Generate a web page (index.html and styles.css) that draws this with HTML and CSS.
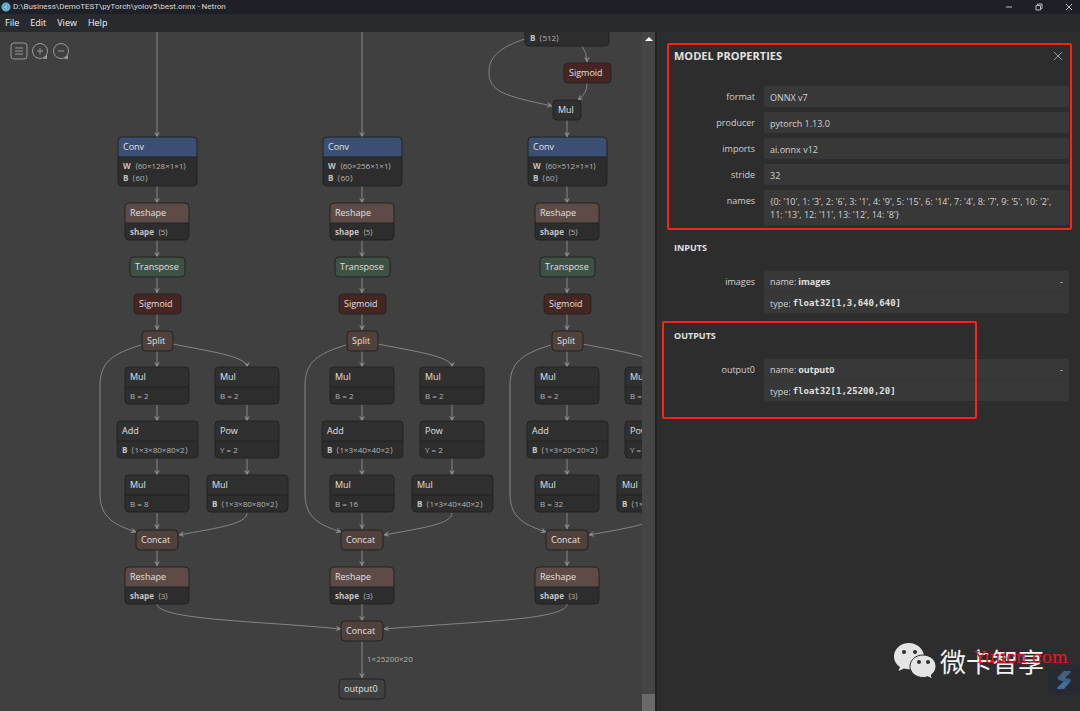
FILE: index.html
```html
<!DOCTYPE html>
<html lang="en">
<head>
    <meta charset="UTF-8">
    <meta name="viewport" content="width=device-width, initial-scale=1.0">
    <title>D:\Business\DemoTEST\pyTorch\yolov5\best.onnx - Netron</title>
    <link rel="stylesheet" href="styles.css">
</head>
<body>
    <header class="titlebar">
        <svg class="app-icon" viewBox="0 0 20 20">
            <circle cx="10" cy="10" r="9.5" fill="#3f8fae"/>
            <circle cx="10" cy="10" r="6.5" fill="none" stroke="#a9d8e8" stroke-width="1.5"/>
            <path d="M12 6L7 10l5 4M8 10h5" fill="none" stroke="#d5eef6" stroke-width="1.5"/>
        </svg>
        <span class="window-title">D:\Business\DemoTEST\pyTorch\yolov5\best.onnx - Netron</span>
        <div class="window-buttons">
            <button aria-label="Minimize"><svg viewBox="0 0 8 8"><path d="M1 4h6"/></svg></button>
            <button aria-label="Restore"><svg viewBox="0 0 8 8"><path d="M1 2.5h4.500v4.500H1zM2.500 2.500V1H7v4.500H5.500"/></svg></button>
            <button aria-label="Close"><svg viewBox="0 0 8 8"><path d="M1 1l6 6M7 1L1 7"/></svg></button>
        </div>
    </header>

    <nav class="menubar">
        <button>File</button>
        <button>Edit</button>
        <button>View</button>
        <button>Help</button>
    </nav>

    <main class="workspace">
        <section class="graph">
            <svg class="canvas" id="canvas">
                <defs>
                    <marker id="arrow" viewBox="0 0 10 10" refX="9" refY="5" markerWidth="6" markerHeight="6" orient="auto" markerUnits="userSpaceOnUse">
                        <path d="M0 0L10 5L0 10L4 5z"/>
                    </marker>
                </defs>
                <g id="scene" transform="translate(0 -32)"></g>
            </svg>
            <div class="toolbar">
                <button aria-label="Menu">
                    <svg viewBox="0 0 18 18"><rect x="1" y="1" width="16" height="16" rx="3"/><path d="M5 6h8M5 9h8M5 12h8"/></svg>
                </button>
                <button aria-label="Zoom in">
                    <svg viewBox="0 0 18 18"><circle cx="9" cy="9" r="7.500"/><path d="M6 9h6M9 6v6M14 14l2 2"/><path class="tail" d="M16 13v4h-4z"/></svg>
                </button>
                <button aria-label="Zoom out">
                    <svg viewBox="0 0 18 18"><circle cx="9" cy="9" r="7.500"/><path d="M6 9h6M14 14l2 2"/><path class="tail" d="M16 13v4h-4z"/></svg>
                </button>
            </div>
            <div class="scrollbar">
                <svg class="scroll-up" viewBox="0 0 8 4"><path d="M0 4L4 0L8 4z"/></svg>
                <div class="scroll-thumb"></div>
            </div>
        </section>

        <aside class="sidebar">
            <button class="close" aria-label="Close">
                <svg viewBox="0 0 10 10"><path d="M1 1l8 8M9 1L1 9"/></svg>
            </button>
            <h1>MODEL PROPERTIES</h1>
            <dl class="properties">
                <dt>format</dt><dd>ONNX v7</dd>
                <dt>producer</dt><dd>pytorch 1.13.0</dd>
                <dt>imports</dt><dd>ai.onnx v12</dd>
                <dt>stride</dt><dd>32</dd>
                <dt>names</dt><dd>{0: '10', 1: '3', 2: '6', 3: '1', 4: '9', 5: '15', 6: '14', 7: '4', 8: '7', 9: '5', 10: '2',<br>11: '13', 12: '11', 13: '12', 14: '8'}</dd>
            </dl>
            <h2>INPUTS</h2>
            <dl class="properties">
                <dt>images</dt>
                <dd class="argument">
                    <div>name: <b>images</b><span class="expander">-</span></div>
                    <div>type: <code>float32[1,3,640,640]</code></div>
                </dd>
            </dl>
            <h2>OUTPUTS</h2>
            <dl class="properties">
                <dt>output0</dt>
                <dd class="argument">
                    <div>name: <b>output0</b><span class="expander">-</span></div>
                    <div>type: <code>float32[1,25200,20]</code></div>
                </dd>
            </dl>

            <div class="highlight highlight-model"></div>
            <div class="highlight highlight-outputs"></div>

            <div class="watermark">
                <svg class="wechat" viewBox="0 0 42 36">
                    <path d="M15 0C6.500 0 0 6 0 13.500c0 4.500 2.200 8 6 10.500L4.500 28l5.500-2.500c1.600.5 3.300.7 5 .7 8.500 0 15-5.700 15-12.700S23.500 0 15 0z"/>
                    <path class="bubble" d="M29 12c-7.300 0-13 5-13 11.300S21.700 34.500 29 34.500c1.700 0 3.200-.3 4.700-.8L38.500 36l-1.300-4c3-2 4.800-5.200 4.800-8.700C42 17 36.300 12 29 12z"/>
                    <circle class="eye" cx="10" cy="9" r="2"/>
                    <circle class="eye" cx="21" cy="9" r="2"/>
                    <circle class="eye" cx="25" cy="19" r="2"/>
                    <circle class="eye" cx="34" cy="19" r="2"/>
                </svg>
                <span class="watermark-name" lang="zh-CN">微卡智享</span>
            </div>
            <span class="site">Yuucn.com</span>
            <div class="badge">
                <svg viewBox="0 0 16 20">
                    <path d="M8 1h6c1 0 1 1 .500 1.500L9 8H1z" fill="#45617f"/>
                    <path d="M4 7l10 2c1 .5 1 2 0 3l-3 1L2 9.500C1.500 8.500 3 7.500 4 7z" fill="#3b6288"/>
                    <path d="M14 12L8 19H2c-1 0-1-1-.500-1.500L7 12z" fill="#3f6f9c"/>
                </svg>
            </div>
        </aside>
    </main>

    <script src="graph.js"></script>
</body>
</html>
```

FILE: styles.css
```css
* {
    margin: 0;
    padding: 0;
    box-sizing: border-box;
}

body {
    font-family: 'Open Sans', 'Noto Sans', sans-serif;
    font-size: 9px;
    color: #d2d2d2;
    background: #404040;
    height: 100vh;
    display: flex;
    flex-direction: column;
    overflow: hidden;
}

button {
    font: inherit;
    color: inherit;
    background: none;
    border: none;
    cursor: pointer;
}

svg {
    display: block;
}

/* window frame */
.titlebar {
    height: 14px;
    background: #1f2027;
    display: flex;
    align-items: center;
    gap: 2px;
    padding-left: 1px;
    flex: none;
}

.app-icon {
    width: 10px;
    height: 10px;
}

.window-title {
    font-family: Roboto, sans-serif;
    font-size: 8px;
    line-height: 14px;
    color: #dadada;
}

.window-buttons {
    margin-left: auto;
    display: flex;
    gap: 22px;
    padding-right: 7px;
}

.window-buttons svg {
    width: 8px;
    height: 8px;
    fill: none;
    stroke: #b8b8b8;
}

.menubar {
    height: 18px;
    background: #292a2e;
    display: flex;
    align-items: center;
    gap: 11px;
    padding: 0 5px 1px;
    flex: none;
    color: #f4f4f4;
}

.workspace {
    flex: 1;
    min-height: 0;
    display: flex;
}

/* graph */
.graph {
    flex: 1;
    min-width: 0;
    display: flex;
    position: relative;
}

.canvas {
    flex: 1;
    min-width: 0;
    height: 100%;
}

.toolbar {
    position: absolute;
    top: 10px;
    left: 10px;
    display: flex;
    gap: 3px;
}

.toolbar svg {
    width: 18px;
    height: 18px;
    fill: none;
    stroke: #989898;
}

.toolbar .tail {
    fill: #989898;
    stroke: none;
}

.scrollbar {
    width: 13px;
    background: #454545;
    display: flex;
    flex-direction: column;
    align-items: center;
    justify-content: space-between;
    padding-top: 5px;
}

.scroll-up {
    width: 8px;
    height: 4px;
    fill: #ffffff;
}

.scroll-thumb {
    width: 100%;
    height: 17px;
    background: #6a6a6a;
}

.node text {
    font-size: 9px;
    fill: #e0e0e0;
}

.node .detail {
    font-size: 8px;
    fill: #b4b4b4;
}

.node .name {
    font-weight: bold;
    fill: #c4c4c4;
}

.node .body {
    fill: #2d2d2d;
}

.node .plain { fill: #303030; }
.node .layer { fill: #3b4f74; }
.node .shape { fill: #5e4b47; }
.node .transform { fill: #3d5145; }
.node .activation { fill: #462622; }
.node .tensor { fill: #50413c; }
.node .output { fill: #404040; }

.node .border {
    fill: none;
    stroke: #222222;
}

.node .divider {
    stroke: #222222;
}

.edge {
    fill: none;
    stroke: #858585;
    marker-end: url(#arrow);
}

#arrow path {
    fill: #8c8c8c;
}

.edge-label {
    font-size: 8px;
    fill: #b0b0b0;
}

/* sidebar */
.sidebar {
    width: 39%;
    min-width: 425px;
    flex: none;
    background: #2d2d2d;
    border-left: 2px solid #222222;
    padding: 16px 11px 0 17px;
    position: relative;
    overflow: hidden;
}

.sidebar h1,
.sidebar h2 {
    line-height: 16px;
    color: #e2e2e2;
}

.sidebar h1 {
    font-size: 11px;
    margin-bottom: 22px;
}

.sidebar h2 {
    font-size: 9px;
    margin: 15px 0;
}

.close {
    position: absolute;
    top: 19px;
    right: 17px;
}

.close svg {
    width: 10px;
    height: 10px;
    fill: none;
    stroke: #9a9a9a;
}

.properties {
    display: grid;
    grid-template-columns: 81px 1fr;
    gap: 5px 9px;
    line-height: 13px;
}

.properties dt {
    text-align: right;
    padding-top: 4px;
}

.properties dd {
    background: #383838;
    border-radius: 2px;
    padding: 5px 6px 4px;
}

.properties dd:not(:last-child) {
    padding-bottom: 3px;
}

.properties .argument {
    padding: 0;
}

.argument div {
    display: flex;
    gap: 2px;
    padding: 4px 6px;
    line-height: 13px;
}

.argument div + div {
    border-top: 1px solid #333333;
    padding-bottom: 3px;
}

.argument b,
.argument code {
    color: #e0e0e0;
}

.argument code {
    font-family: 'DejaVu Sans Mono', monospace;
    font-weight: bold;
}

.expander {
    margin-left: auto;
}

/* annotations over the panel */
.highlight {
    position: absolute;
    border: 2px solid #fb2318;
    border-radius: 2px;
    pointer-events: none;
}

.highlight-model {
    top: 11px;
    left: 10px;
    right: 8px;
    height: 187px;
}

.highlight-outputs {
    top: 289px;
    left: 5px;
    right: 103px;
    height: 98px;
}

.watermark {
    position: absolute;
    right: 36px;
    bottom: 32px;
    display: flex;
    align-items: center;
    gap: 4px;
}

.wechat {
    width: 42px;
    height: 36px;
    fill: #e4e4e4;
}

.wechat .bubble {
    stroke: #2d2d2d;
}

.wechat .eye {
    fill: #2d2d2d;
}

.watermark-name {
    font-family: 'Noto Sans CJK SC', sans-serif;
    font-size: 26px;
    line-height: 32px;
    color: #f4f4f4;
}

.site {
    position: absolute;
    right: 12px;
    bottom: 44px;
    font-family: 'DejaVu Serif', serif;
    font-size: 17px;
    line-height: 20px;
    color: #f0121c;
}

.badge {
    position: absolute;
    right: 0;
    bottom: 16px;
    width: 32px;
    height: 30px;
    border-radius: 6px 0 0 6px;
    background: #272a31;
    display: flex;
    align-items: center;
    justify-content: center;
}

.badge svg {
    width: 16px;
    height: 20px;
}
```

FILE: graph.js
```js
const SVG_NS = 'http://www.w3.org/2000/svg';
const scene = document.getElementById('scene');

function add(parent, tag, attrs, text) {
    const el = document.createElementNS(SVG_NS, tag);
    for (const key in attrs) {
        el.setAttribute(key, attrs[key]);
    }
    if (text) {
        el.textContent = text;
    }
    parent.appendChild(el);
    return el;
}

// rounded node, cx is its centre; rows are [name, value] pairs below the title
function node(cx, y, width, title, type, rows = []) {
    const left = cx - Math.floor(width / 2);
    const header = 20;
    const height = rows.length ? header + 5 + rows.length * 12 : header;
    const g = add(scene, 'g', { class: 'node', transform: `translate(${left} ${y})` });
    add(g, 'rect', { class: rows.length ? 'body' : type, width, height, rx: 4 });
    if (rows.length) {
        add(g, 'path', { class: type, d: `M0 ${header}V4Q0 0 4 0H${width - 4}Q${width} 0 ${width} 4V${header}z` });
        add(g, 'path', { class: 'divider', d: `M0 ${header}H${width}` });
    }
    add(g, 'text', { x: 5, y: 13 }, title);
    rows.forEach(([name, value], i) => {
        const line = add(g, 'text', { class: 'detail', x: 5, y: 32 + i * 12 });
        if (value.startsWith('=')) {
            line.textContent = `${name} ${value}`;
        } else {
            add(line, 'tspan', { class: 'name' }, name);
            add(line, 'tspan', { dx: 4 }, `⟨${value}⟩`);
        }
    });
    add(g, 'rect', { class: 'border', width, height, rx: 4 });
}

function edge(d) {
    add(scene, 'path', { class: 'edge', d });
}

// one detection head of the network
function head(cx, channels, grid, stride) {
    const size = `1×3×${grid}×${grid}×2`;
    const side = cx + 90;

    [[186, 203], [240, 257], [277, 293], [314, 330], [351, 367], [405, 421],
     [459, 475], [513, 529], [550, 566]].forEach(([from, to]) => edge(`M${cx} ${from}V${to}`));
    edge(`M${side} 405V421`);
    edge(`M${side} 459V475`);
    edge(`M${cx - 16} 345C${cx - 45} 354 ${cx - 57} 362 ${cx - 57} 386V494C${cx - 57} 518 ${cx - 42} 525 ${cx - 21} 532`);
    edge(`M${cx + 16} 344C${cx + 50} 351 ${side} 356 ${side} 367`);
    edge(`M${side} 513C${side} 524 ${cx + 60} 528 ${cx + 22} 535`);

    node(cx, 137, 79, 'Conv', 'layer', [['W', `60×${channels}×1×1`], ['B', '60']]);
    node(cx, 203, 64, 'Reshape', 'shape', [['shape', '5']]);
    node(cx, 257, 55, 'Transpose', 'transform');
    node(cx, 294, 47, 'Sigmoid', 'activation');
    node(cx, 331, 31, 'Split', 'tensor');
    node(cx, 367, 64, 'Mul', 'plain', [['B', '= 2']]);
    node(cx, 421, 81, 'Add', 'plain', [['B', size]]);
    node(cx, 475, 64, 'Mul', 'plain', [['B', `= ${stride}`]]);
    node(side, 367, 64, 'Mul', 'plain', [['B', '= 2']]);
    node(side, 421, 64, 'Pow', 'plain', [['Y', '= 2']]);
    node(side, 475, 81, 'Mul', 'plain', [['B', size]]);
    node(cx, 530, 42, 'Concat', 'tensor');
    node(cx, 567, 64, 'Reshape', 'shape', [['shape', '3']]);
}

edge('M157 0V137');
edge('M362 0V137');
head(157, 128, 80, 8);
head(362, 256, 40, 16);
head(567, 512, 20, 32);

// end of the backbone branch above the third head
edge('M525 39C500 47 489 57 489 72C489 92 505 96 552 106');
edge('M582 46Q587 53 587 62');
edge('M587 83C587 92 583 96 578 100');
edge('M567 120V137');
node(567, 9, 84, 'Conv', 'layer', [['B', '512']]);
node(587, 63, 47, 'Sigmoid', 'activation');
node(567, 100, 28, 'Mul', 'plain');

// merged output
edge('M157 604C158 620 260 621 341 629');
edge('M362 604V621');
edge('M567 604C566 620 480 621 384 629');
edge('M362 641V678');
add(scene, 'text', { class: 'edge-label', x: 367, y: 662 }, '1×25200×20');
node(362, 621, 42, 'Concat', 'tensor');
node(362, 679, 46, 'output0', 'output');
```
